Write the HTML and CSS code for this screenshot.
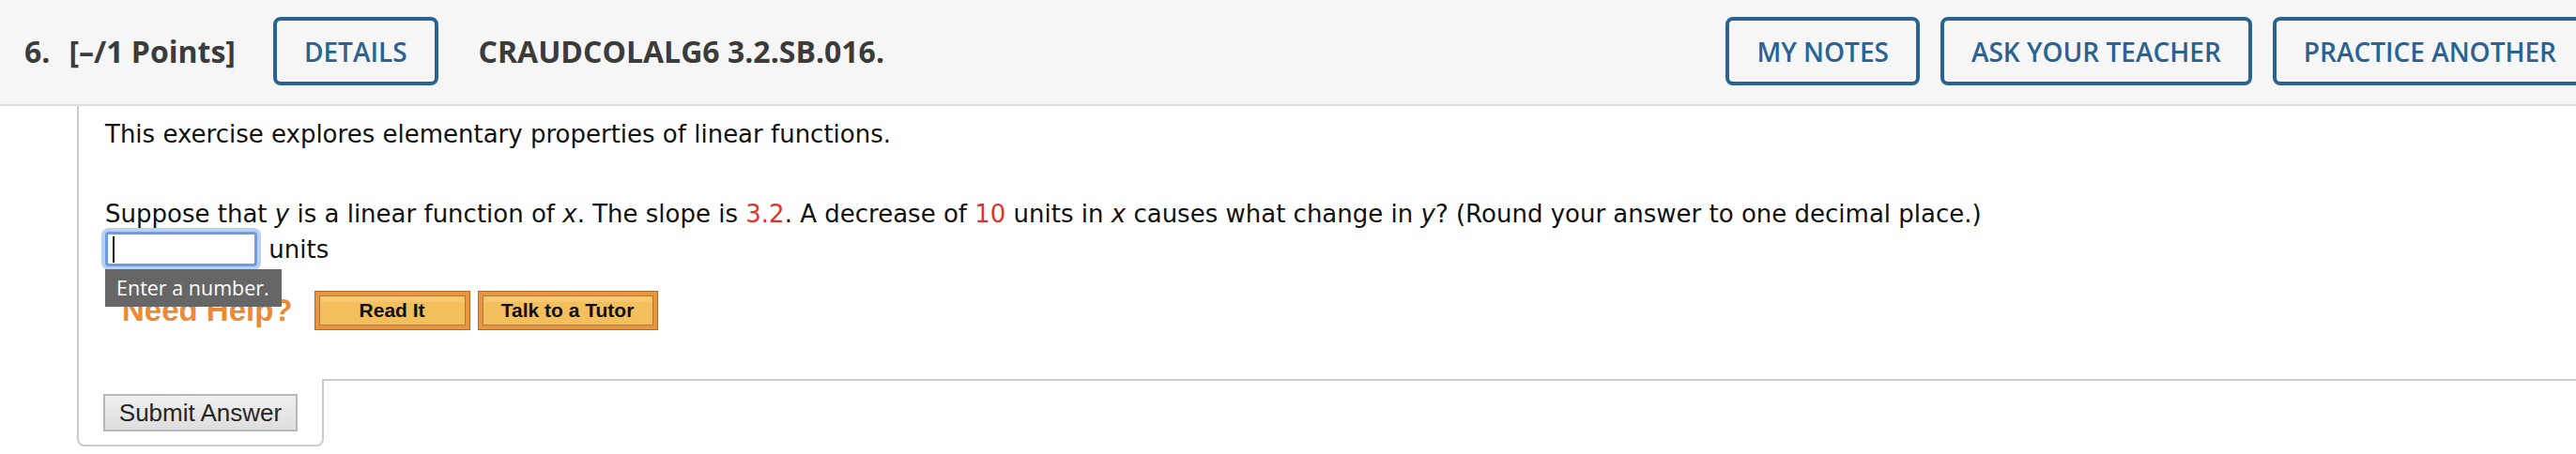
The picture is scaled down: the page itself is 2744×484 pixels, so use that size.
FILE: index.html
```html
<!DOCTYPE html>
<html lang="en">

<head>
    <meta charset="UTF-8">
    <meta name="viewport" content="width=device-width, initial-scale=1.0">
    <title>Question 6</title>
    <link rel="stylesheet" href="styles.css">
</head>

<body>
    <header class="q-header">
        <span class="q-num">6.</span>
        <span class="q-points">[&ndash;/1 Points]</span>
        <a class="outline-btn details-btn" href="#">DETAILS</a>
        <span class="q-code">CRAUDCOLALG6 3.2.SB.016.</span>

        <div class="header-actions">
            <a class="outline-btn" href="#">MY NOTES</a>
            <a class="outline-btn" href="#">ASK YOUR TEACHER</a>
            <a class="outline-btn" href="#">PRACTICE ANOTHER</a>
        </div>
    </header>

    <main class="question">
        <div class="question-body">
            <p class="q-intro">This exercise explores elementary properties of linear functions.</p>

            <p class="q-text">
                Suppose that <i>y</i> is a linear function of <i>x</i>. The slope is <span class="given">3.2</span>.
                A decrease of <span class="given">10</span> units in <i>x</i> causes what change in <i>y</i>?
                (Round your answer to one decimal place.)<br>
                <span class="answer-wrap">
                    <input type="text" class="answer-input" aria-label="answer">
                    <span class="tooltip">Enter a number.</span>
                </span>
                units
            </p>

            <div class="help-row">
                <span class="need-help">Need Help?</span>
                <button class="help-btn read-it">Read It</button>
                <button class="help-btn tutor">Talk to a Tutor</button>
            </div>
        </div>

        <div class="submit-row">
            <div class="submit-tab">
                <button class="submit-btn">Submit Answer</button>
            </div>
            <div class="submit-rule"></div>
        </div>
    </main>
</body>

</html>
```

FILE: styles.css
```css
html,
body {
    margin: 0;
    padding: 0;
    background-color: #fff;
    overflow: hidden;
}

body {
    font-family: "DejaVu Sans", Verdana, sans-serif;
    color: #111;
}

/* header bar */
.q-header {
    display: flex;
    align-items: center;
    box-sizing: border-box;
    width: calc(100% + 12px);
    padding: 18px 0 20px 26px;
    background-color: #f6f6f6;
    border-bottom: 2px solid #dddddd;
    font-family: "Open Sans", sans-serif;
    color: #3b3b3b;
}

.q-num,
.q-points,
.q-code {
    font-size: 32px;
    font-weight: 700;
    white-space: nowrap;
}

.q-num {
    margin-right: 20px;
}

.details-btn {
    margin-left: 40px;
}

.q-code {
    margin-left: 43px;
}

.header-actions {
    display: flex;
    gap: 22px;
    margin-left: auto;
}

.outline-btn {
    display: inline-flex;
    align-items: center;
    box-sizing: border-box;
    height: 73px;
    padding: 0 29px;
    border: 4px solid #2a6294;
    border-radius: 8px;
    color: #2a6294;
    font-size: 28px;
    font-weight: 600;
    text-decoration: none;
    white-space: nowrap;
}

/* question area */
.question {
    margin-left: 82px;
}

.question-body {
    border-left: 2px solid #cccccc;
    padding: 11px 0 52px 28px;
    font-size: 26px;
}

.q-intro {
    margin: 0 0 47px 0;
    line-height: 38px;
}

.q-text {
    margin: 0;
    line-height: 38px;
}

.given {
    color: #e2332b;
}

.answer-wrap {
    position: relative;
    display: inline-block;
    vertical-align: top;
    margin-right: 4px;
}

.answer-input {
    display: block;
    box-sizing: border-box;
    width: 162px;
    height: 37px;
    margin: 0;
    padding: 0 6px;
    border: 3px solid #6b9ce8;
    border-radius: 4px;
    box-shadow: 0 0 0 4px #b7d0f4;
    outline: none;
    /* the text caret */
    background: #fff linear-gradient(#111, #111) no-repeat 5px center / 2px 28px;
    font-size: 26px;
}

.tooltip {
    position: absolute;
    top: 40px;
    left: 0;
    z-index: 2;
    width: 188px;
    height: 40px;
    box-sizing: border-box;
    padding-left: 12px;
    background-color: #666;
    color: #fff;
    font-family: "Open Sans", sans-serif;
    font-size: 21.5px;
    line-height: 40px;
    white-space: nowrap;
}

.help-row {
    display: flex;
    align-items: center;
    margin-top: 25px;
}

.need-help {
    margin-left: 18px;
    margin-right: 23px;
    color: #ec8a33;
    font-family: "Liberation Sans", Arial, sans-serif;
    font-size: 33px;
    font-weight: 700;
    white-space: nowrap;
}

.help-btn {
    box-sizing: border-box;
    height: 42px;
    margin-right: 8px;
    padding: 0;
    border: 1px solid #b0692a;
    background: #f3be5c;
    box-shadow: inset 0 0 0 4px #e8953f, inset 0 0 0 5px #b27b3a, inset 0 7px 0 4px #f6c873;
    color: #111;
    font-family: "Liberation Sans", Arial, sans-serif;
    font-size: 21px;
    font-weight: 700;
    white-space: nowrap;
    cursor: pointer;
}

.read-it {
    width: 166px;
}

.tutor {
    width: 192px;
}

/* submit tab */
.submit-row {
    display: flex;
}

.submit-tab {
    padding: 16px 26px 14px 26px;
    border: 2px solid #cccccc;
    border-top: none;
    border-radius: 0 0 8px 8px;
}

.submit-rule {
    flex: 1;
    align-self: flex-start;
    border-top: 2px solid #cccccc;
}

.submit-btn {
    display: block;
    box-sizing: border-box;
    width: 207px;
    height: 40px;
    padding: 0;
    border: 2px solid #b8b8b8;
    background: linear-gradient(#f0f0f0, #dedede);
    color: #262626;
    font-family: "Liberation Sans", Arial, sans-serif;
    font-size: 26px;
    cursor: pointer;
}
```
